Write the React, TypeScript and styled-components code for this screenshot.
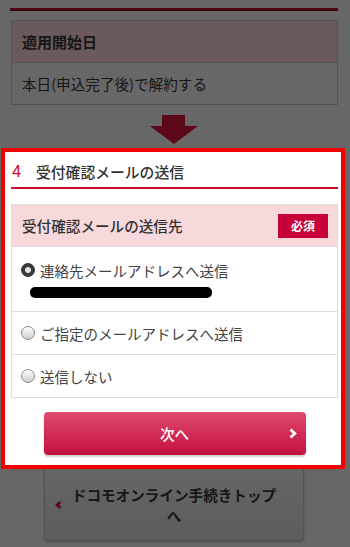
import React from 'react';
import styled, { createGlobalStyle } from 'styled-components';

const RED = '#c8102e';

// colours of the page part that lies under the dark overlay
const dim = {
  bg: '#676767',
  rule: '#4c0812',
  border: '#545454',
  headBg: '#6b5a5b',
  text: '#161616',
  arrow: '#5c0818',
  buttonTop: '#656565',
  buttonBottom: '#5d5d5d',
};

const GlobalStyle = createGlobalStyle`
  html, body {
    margin: 0;
    padding: 0;
    background-color: ${dim.bg};
  }
  body {
    font-family: "Noto Sans CJK JP", "Noto Sans", sans-serif;
    color: #333;
  }
`;

interface RadioOption {
  label: string;
  checked?: boolean;
  redacted?: boolean;
}

const options: RadioOption[] = [
  { label: '連絡先メールアドレスへ送信', checked: true, redacted: true },
  { label: 'ご指定のメールアドレスへ送信' },
  { label: '送信しない' },
];

const App = () => {
  return (
    <>
      <GlobalStyle />
      <Page>
        <TopSection>
          <TopRule />
          <InfoTable>
            <InfoHead>適用開始日</InfoHead>
            <InfoCell>本日(申込完了後)で解約する</InfoCell>
          </InfoTable>
          <ArrowWrap>
            <svg width="48" height="29" viewBox="0 0 48 29">
              <path d="M12 0H35V11H48L24 29L0 11H12Z" fill={dim.arrow} />
            </svg>
          </ArrowWrap>
        </TopSection>

        <Highlight>
          <StepTitle>
            <StepNumber>4</StepNumber>
            <StepText>受付確認メールの送信</StepText>
          </StepTitle>

          <FormTable>
            <FormHead>
              <span>受付確認メールの送信先</span>
              <Required>必須</Required>
            </FormHead>
            {options.map((opt) => (
              <RadioRow key={opt.label} $tall={opt.redacted}>
                <RadioLine>
                  <Radio $checked={opt.checked} />
                  <RadioLabel>{opt.label}</RadioLabel>
                </RadioLine>
                {opt.redacted && <Redacted />}
              </RadioRow>
            ))}
          </FormTable>

          <NextButton>
            <span />
            <ButtonText>次へ</ButtonText>
            <svg width="8" height="11" viewBox="0 0 8 11">
              <polyline
                points="1.5,1.5 5.8,5.5 1.5,9.5"
                fill="none"
                stroke="#fff"
                strokeWidth="2.8"
              />
            </svg>
          </NextButton>
        </Highlight>

        <BottomSection>
          <BackButton>
            <svg width="7" height="8" viewBox="0 0 7 8">
              <polyline
                points="5.5,1 2,4 5.5,7"
                fill="none"
                stroke={dim.arrow}
                strokeWidth="2.6"
              />
            </svg>
            <BackText>ドコモオンライン手続きトップへ</BackText>
            <span />
          </BackButton>
        </BottomSection>
      </Page>
    </>
  );
};

export default App;

const Page = styled.div`
  width: 350px;
  height: 547px;
  overflow: hidden;
  display: flex;
  flex-direction: column;
  background-color: ${dim.bg};
`;

const TopSection = styled.div`
  display: flex;
  flex-direction: column;
  padding: 8px 12px 4px 10px;
  background-color: ${dim.bg};
`;

const TopRule = styled.div`
  height: 2px;
  background: ${dim.rule};
  border-bottom: 1px solid #2e060c;
`;

const InfoTable = styled.div`
  margin: 9px 0 0 1px;
  border: 1px solid ${dim.border};
`;

const InfoHead = styled.div`
  height: 41px;
  display: flex;
  align-items: center;
  padding: 0 10px;
  background-color: ${dim.headBg};
  border-bottom: 1px solid ${dim.border};
  font-size: 15px;
  font-weight: 700;
  color: ${dim.text};
`;

const InfoCell = styled.div`
  height: 41px;
  display: flex;
  align-items: center;
  padding: 0 10px;
  font-size: 14.6px;
  color: ${dim.text};
`;

const ArrowWrap = styled.div`
  margin-top: 10px;
  height: 29px;
  display: flex;
  justify-content: center;

  svg {
    display: block;
  }
`;

const Highlight = styled.div`
  margin-left: 1px;
  width: 344px;
  box-sizing: border-box;
  border: 4px solid #f20000;
  background: #fff;
  padding: 0 3px 10px 6px;
  display: flex;
  flex-direction: column;
`;

const StepTitle = styled.div`
  height: 32px;
  padding-top: 3px;
  display: flex;
  align-items: center;
  border-bottom: 2px solid ${RED};
`;

const StepNumber = styled.span`
  width: 25px;
  padding-left: 1px;
  box-sizing: border-box;
  font-family: "Roboto", "Noto Sans", sans-serif;
  font-size: 16px;
  font-weight: 400;
  color: ${RED};
`;

const StepText = styled.span`
  font-size: 14.8px;
  font-weight: 500;
  color: #333;
`;

const FormTable = styled.div`
  margin-top: 15px;
  border: 1px solid #ddd;
`;

const FormHead = styled.div`
  height: 41px;
  display: flex;
  align-items: center;
  justify-content: space-between;
  padding: 0 9px 0 10px;
  background: #f7d8db;
  border-bottom: 1px solid #ddd;
  font-size: 14.6px;
  font-weight: 500;
  color: #333;
`;

const Required = styled.span`
  width: 50px;
  height: 24px;
  display: flex;
  align-items: center;
  justify-content: center;
  background: #c8003a;
  color: #fff;
  font-size: 12px;
  font-weight: 700;
`;

const RadioRow = styled.div<{ $tall?: boolean }>`
  height: ${(p) => (p.$tall ? 64 : 42)}px;
  display: flex;
  flex-direction: column;
  justify-content: ${(p) => (p.$tall ? 'flex-start' : 'center')};
  padding: ${(p) => (p.$tall ? '14px' : '0')} 9px 0 9px;
  box-sizing: border-box;

  & + & {
    border-top: 1px solid #ddd;
    height: ${(p) => (p.$tall ? 65 : 43)}px;
  }
`;

const RadioLine = styled.div`
  display: flex;
  align-items: center;
  gap: 5px;
  height: 18px;
`;

const Radio = styled.span<{ $checked?: boolean }>`
  width: 14px;
  height: 14px;
  border-radius: 50%;
  box-sizing: border-box;
  flex-shrink: 0;
  border: 1px solid ${(p) => (p.$checked ? '#333' : '#8a8a8a')};
  background: ${(p) =>
    p.$checked
      ? 'radial-gradient(circle, #e6e6e6 0 2.6px, #3a3a3a 3.3px)'
      : 'linear-gradient(#fdfdfd, #cfcfcf)'};
`;

const RadioLabel = styled.span`
  font-size: 14.5px;
  color: #444;
  white-space: nowrap;
`;

const Redacted = styled.span`
  display: block;
  margin: 8px 0 0 9px;
  width: 182px;
  height: 11px;
  border-radius: 5px;
  background: #000;
`;

const NextButton = styled.button`
  margin: 14px auto 0;
  width: 262px;
  height: 43px;
  display: grid;
  grid-template-columns: 24px 1fr 24px;
  align-items: center;
  justify-items: center;
  padding: 0 9px;
  border: none;
  border-radius: 4px;
  background: linear-gradient(#de4a6d, #c4103f);
  box-shadow: 0 2px 2px rgba(0, 0, 0, 0.2);
  cursor: pointer;

  svg {
    justify-self: end;
    display: block;
  }
`;

const ButtonText = styled.span`
  color: #fff;
  font-family: "Noto Sans CJK JP", sans-serif;
  font-size: 14.6px;
  font-weight: 500;
`;

const BottomSection = styled.div`
  flex: 1;
  padding: 0 46px 0 44px;
  background-color: ${dim.bg};
`;

const BackButton = styled.div`
  height: 72px;
  display: grid;
  grid-template-columns: 16px 1fr 16px;
  align-items: center;
  padding: 0 10px;
  box-sizing: border-box;
  border: 1px solid ${dim.border};
  border-top: none;
  border-radius: 0 0 4px 4px;
  background: linear-gradient(${dim.buttonTop}, ${dim.buttonBottom});
  box-shadow: 0 1px 2px rgba(0, 0, 0, 0.25);

  svg {
    display: block;
  }
`;

const BackText = styled.span`
  text-align: center;
  font-size: 14.6px;
  font-weight: 700;
  line-height: 21px;
  color: ${dim.text};
`;
